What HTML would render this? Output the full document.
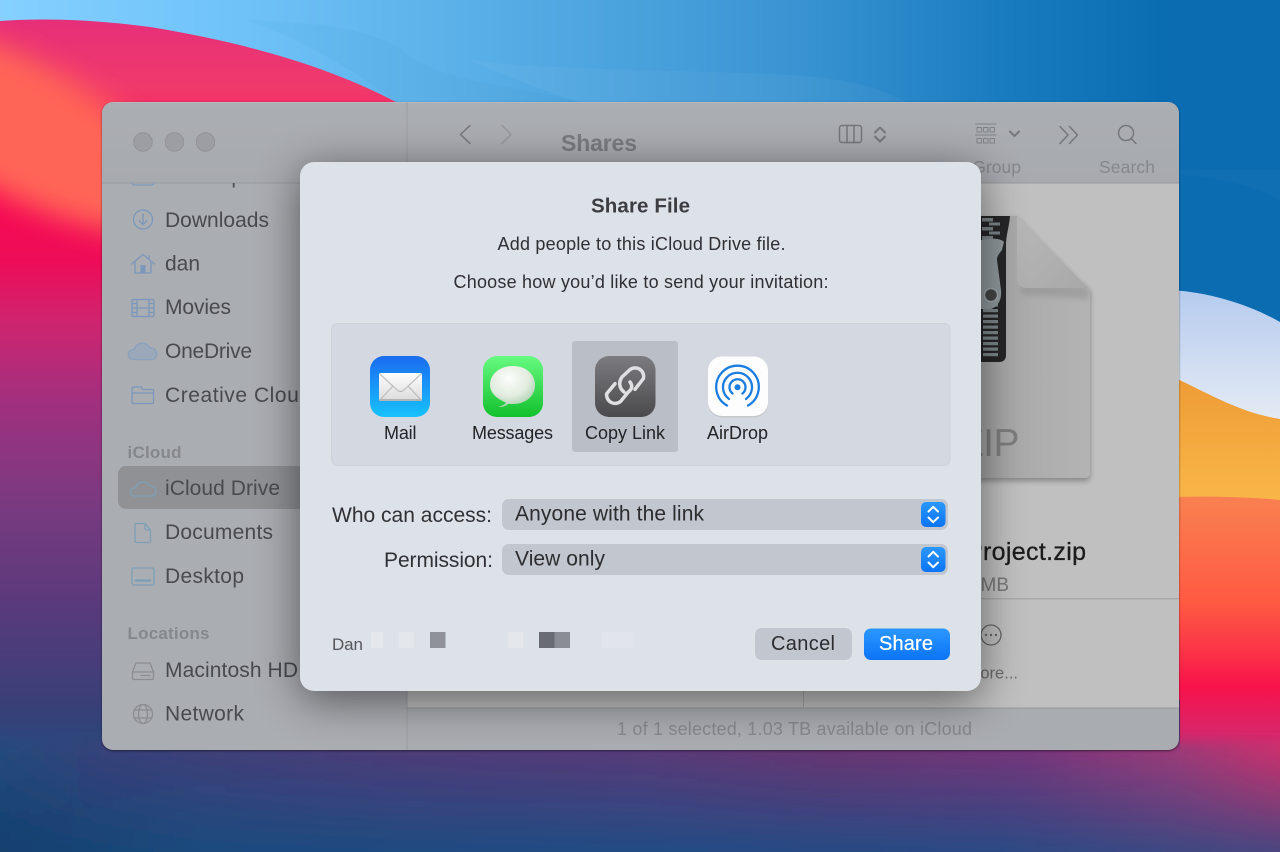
<!DOCTYPE html>
<html><head><meta charset="utf-8"><title>Share File</title>
<style>
html,body{margin:0;padding:0;width:1280px;height:852px;overflow:hidden;background:#1f4c82}
svg{display:block;position:absolute;left:0;top:0;filter:blur(.3px)}
text{font-family:"Liberation Sans",sans-serif;white-space:pre}
</style></head><body>
<svg width="1280" height="852" viewBox="0 0 1280 852" xmlns="http://www.w3.org/2000/svg">
<defs>
<linearGradient id="sky" x1="0" y1="0" x2="1" y2="0"><stop offset="0" stop-color="#85d0ff"/><stop offset=".19" stop-color="#6ec2f8"/><stop offset=".38" stop-color="#58aee6"/><stop offset=".62" stop-color="#3a94d2"/><stop offset=".78" stop-color="#1a7cc0"/><stop offset=".94" stop-color="#0669ae"/><stop offset="1" stop-color="#0566aa"/></linearGradient>
<linearGradient id="left" gradientUnits="userSpaceOnUse" x1="0" y1="20" x2="0" y2="852"><stop offset="0" stop-color="#e62f78"/><stop offset=".08" stop-color="#f03a6c"/><stop offset=".18" stop-color="#fb0a52"/><stop offset=".29" stop-color="#ee0c58"/><stop offset=".36" stop-color="#d0246f"/><stop offset=".46" stop-color="#a0307f"/><stop offset=".58" stop-color="#7a3a80"/><stop offset=".7" stop-color="#5a3a7c"/><stop offset=".82" stop-color="#3a3f78"/><stop offset=".89" stop-color="#264a7c"/><stop offset="1" stop-color="#12406e"/></linearGradient>
<linearGradient id="wave" gradientUnits="userSpaceOnUse" x1="0" y1="290" x2="0" y2="420"><stop offset="0" stop-color="#b6cbee"/><stop offset="1" stop-color="#e4ebf5"/></linearGradient>
<linearGradient id="orange" gradientUnits="userSpaceOnUse" x1="0" y1="380" x2="0" y2="500"><stop offset="0" stop-color="#ee9c36"/><stop offset="1" stop-color="#f9b648"/></linearGradient>
<linearGradient id="red" gradientUnits="userSpaceOnUse" x1="0" y1="497" x2="0" y2="760"><stop offset="0" stop-color="#f98050"/><stop offset=".4" stop-color="#ff5a42"/><stop offset=".6" stop-color="#fb3048"/><stop offset=".72" stop-color="#f8124a"/><stop offset=".88" stop-color="#dc2468"/><stop offset="1" stop-color="#c02e72"/></linearGradient>
<linearGradient id="bot" gradientUnits="userSpaceOnUse" x1="0" y1="0" x2="1280" y2="0"><stop offset="0" stop-color="#264a7c"/><stop offset=".08" stop-color="#38427a"/><stop offset=".31" stop-color="#4f3c78"/><stop offset=".5" stop-color="#5a3a78"/><stop offset=".65" stop-color="#6a3572"/><stop offset=".8" stop-color="#78357a"/><stop offset=".92" stop-color="#a03a78"/><stop offset="1" stop-color="#d0306c"/></linearGradient>
<linearGradient id="bot2" gradientUnits="userSpaceOnUse" x1="0" y1="0" x2="1280" y2="0"><stop offset="0" stop-color="#12406e"/><stop offset=".16" stop-color="#1c4a7e"/><stop offset=".5" stop-color="#224c84"/><stop offset=".78" stop-color="#2a4a84"/><stop offset="1" stop-color="#484680"/></linearGradient>
<linearGradient id="fade" x1="0" y1="0" x2="0" y2="1"><stop offset="0" stop-color="#fff" stop-opacity="0"/><stop offset=".5" stop-color="#fff" stop-opacity=".5"/><stop offset="1" stop-color="#fff" stop-opacity="1"/></linearGradient>
<mask id="fm" maskUnits="userSpaceOnUse" x="-40" y="745" width="1360" height="140"><rect x="-40" y="745" width="1360" height="107" fill="url(#fade)"/><rect x="-40" y="852" width="1360" height="40" fill="#fff"/></mask>
<linearGradient id="title" x1="0" y1="0" x2="0" y2="1"><stop offset="0" stop-color="#abaeb3"/><stop offset="1" stop-color="#a7aaaf"/></linearGradient>
<linearGradient id="mail" x1="0" y1="0" x2="0" y2="1"><stop offset="0" stop-color="#1a6cf0"/><stop offset="1" stop-color="#17c2fc"/></linearGradient>
<linearGradient id="env" x1="0" y1="0" x2="0" y2="1"><stop offset="0" stop-color="#fdfdfd"/><stop offset="1" stop-color="#dcdcdc"/></linearGradient>
<linearGradient id="msg" x1="0" y1="0" x2="0" y2="1"><stop offset="0" stop-color="#66fa80"/><stop offset="1" stop-color="#12c02c"/></linearGradient>
<radialGradient id="bub" cx=".42" cy=".3" r=".8"><stop offset="0" stop-color="#fbfdfb"/><stop offset=".55" stop-color="#e2ecdf"/><stop offset="1" stop-color="#9cc8a4"/></radialGradient>
<linearGradient id="lnk" x1="0" y1="0" x2="0" y2="1"><stop offset="0" stop-color="#7c7c80"/><stop offset="1" stop-color="#4a4a4c"/></linearGradient>
<linearGradient id="sh" x1="0" y1="0" x2="0" y2="1"><stop offset="0" stop-color="#2b97ff"/><stop offset="1" stop-color="#0a74f5"/></linearGradient>
<linearGradient id="pg" x1="0" y1="0" x2="1" y2="0"><stop offset="0" stop-color="#a4a4a4"/><stop offset="1" stop-color="#b4b4b4"/></linearGradient>
<linearGradient id="fold" x1="0" y1="0" x2="1" y2="1"><stop offset="0" stop-color="#b8b8b8"/><stop offset="1" stop-color="#a8a8a8"/></linearGradient>
<pattern id="teeth" x="983" y="303" width="17" height="5.500" patternUnits="userSpaceOnUse"><rect x="0" y=".5" width="15" height="3.200" fill="#7d878b"/></pattern>
<pattern id="teeth2" x="982" y="217" width="20" height="9" patternUnits="userSpaceOnUse"><rect x="0" y="1" width="11" height="3.500" fill="#7d878b"/><rect x="7" y="5.500" width="11" height="3" fill="#7d878b"/></pattern>
<clipPath id="win"><rect x="102" y="102" width="1077" height="648" rx="11"/></clipPath>
<clipPath id="sideclip"><rect x="102" y="183" width="305" height="10"/></clipPath>
<clipPath id="redc"><path d="M0,21 C40,18 90,19 150,27 C230,40 320,62 396,102 L420,400 L0,400Z"/></clipPath>
<filter id="blur" x="-30%" y="-30%" width="160%" height="160%"><feGaussianBlur stdDeviation="22"/></filter>
<filter id="b14" x="-50%" y="-50%" width="200%" height="200%"><feGaussianBlur stdDeviation="14"/></filter>
<filter id="b6" filterUnits="userSpaceOnUse" x="-60" y="700" width="1400" height="200"><feGaussianBlur stdDeviation="6"/></filter>
<filter id="s2" x="-30%" y="-30%" width="160%" height="160%"><feGaussianBlur stdDeviation="3"/></filter>
<filter id="s1" x="-20%" y="-20%" width="140%" height="140%"><feGaussianBlur stdDeviation="1"/></filter>
</defs>

<!-- wallpaper -->
<rect width="1280" height="852" fill="url(#sky)"/>
<path d="M470,60 C530,70 700,70 790,75 C840,78 875,85 906,102 L580,102 C540,90 505,75 470,60Z" fill="#ffffff" opacity=".04"/>
<path d="M245,20 C320,22 370,30 400,48 C440,85 520,85 580,102 L396,102 C340,60 290,35 245,20Z" fill="#08508a" opacity=".03"/>
<path d="M0,21 C40,18 90,19 150,27 C230,40 320,62 396,102 L420,852 L0,852Z" fill="url(#left)"/>
<g clip-path="url(#redc)"><ellipse cx="20" cy="128" rx="185" ry="66" transform="rotate(28 20 128)" fill="#ff6556" filter="url(#b14)"/></g>
<path d="M1170,0H1280V322H1170Z" fill="#0b6cb2"/>
<path d="M1170,170H1280V200C1240,178 1200,178 1170,172Z" fill="#fff" opacity=".025"/>
<path d="M1170,290 C1210,292 1250,305 1280,322 V430 H1170Z" fill="url(#wave)"/>
<path d="M1170,376 C1200,388 1235,412 1280,419 V510 H1170Z" fill="url(#orange)"/>
<path d="M1170,497 C1210,496 1250,497 1280,500 V852 H1170Z" fill="url(#red)"/>
<rect x="102" y="700" width="1078" height="60" fill="#5a3a78"/>
<g filter="url(#b6)">
<rect x="-40" y="742" width="1360" height="150" fill="url(#bot)"/>
<rect x="-40" y="742" width="1360" height="150" fill="url(#bot2)" mask="url(#fm)"/>
</g>

<!-- window -->
<rect x="102" y="103" width="1077" height="648" rx="11" fill="#000" opacity=".5" filter="url(#s1)"/>
<g clip-path="url(#win)">
<rect x="102" y="102" width="1077" height="648" fill="#aaadb2"/>
<rect x="102" y="102" width="1077" height="81" fill="url(#title)"/>
<rect x="407" y="183" width="772" height="525" fill="#c0c0c0"/>
<rect x="407" y="708" width="772" height="42" fill="#a9acb1"/>
<rect x="102" y="182.500" width="1077" height="1" fill="#97999d"/>
<rect x="406.500" y="102" width="1" height="648" fill="#9c9ea2"/>
<rect x="407" y="707.500" width="772" height="1" fill="#98999d"/>
<rect x="803" y="600" width="1" height="108" fill="#a4a4a4"/>
<rect x="803" y="598" width="376" height="1.400" fill="#aaaaaa"/>
<rect x="102" y="102" width="1077" height="1" fill="#bcbec2" opacity=".7"/>

<!-- traffic lights -->
<g fill="#9c9ea3" stroke="#8e9095" stroke-width=".8"><circle cx="143" cy="142" r="9.300"/><circle cx="174.500" cy="142" r="9.300"/><circle cx="205.500" cy="142" r="9.300"/></g>

<!-- toolbar -->
<g fill="none" stroke="#74777c" stroke-width="1.500" stroke-linecap="round" stroke-linejoin="round">
<path d="M470,125.500 L460.500,134.500 L470,143.500"/>
<path d="M502,125.500 L511,134.500 L502,143.500" stroke="#94979c"/>
<rect x="839.500" y="125.500" width="22" height="17" rx="2.500"/><path d="M847,125.500V142.500M854,125.500V142.500"/>
<path d="M875,132.500 L880,127.500 L885,132.500M875,136.500 L880,141.500 L885,136.500" stroke-width="2"/>
<g stroke-width="1" stroke="#808388"><path d="M975.500,124H996M975.500,135H996"/><rect x="977" y="127.500" width="4.500" height="4.500"/><rect x="983.500" y="127.500" width="4.500" height="4.500"/><rect x="990" y="127.500" width="4.500" height="4.500"/><rect x="977" y="138.500" width="4.500" height="4.500"/><rect x="983.500" y="138.500" width="4.500" height="4.500"/><rect x="990" y="138.500" width="4.500" height="4.500"/></g>
<path d="M1010,131.500 L1014.500,136 L1019,131.500" stroke-width="2"/>
<path d="M1060,126.500 L1068,135 L1060,143.500M1069.500,126.500 L1077.500,135 L1069.500,143.500"/>
<circle cx="1126" cy="133" r="7.500"/><path d="M1131.500,139 L1136,143.500"/>
</g>
<text x="561" y="151" font-size="23" font-weight="700" fill="#797b80" textLength="76">Shares</text>
<text x="1021" y="173" text-anchor="end" font-size="17.500" fill="#85888c">Group</text>
<text x="1099" y="173" font-size="17.500" fill="#85888c" textLength="56">Search</text>

<!-- sidebar -->
<g clip-path="url(#sideclip)"><text x="165" y="183" font-size="21" fill="#4e5056" textLength="78">Desktop</text><rect x="132" y="172" width="22" height="13" rx="2" fill="none" stroke="#7e9bc0" stroke-width="1.300"/></g>
<g font-size="21" fill="#484a50">
<text x="165" y="227" textLength="104">Downloads</text>
<text x="165" y="270.500" textLength="35">dan</text>
<text x="165" y="314" textLength="66">Movies</text>
<text x="165" y="358" textLength="87">OneDrive</text>
<text x="165" y="402" textLength="146">Creative Cloud</text>
<text x="165" y="539" textLength="108">Documents</text>
<text x="165" y="583" textLength="79">Desktop</text>
<text x="165" y="677" textLength="133">Macintosh HD</text>
<text x="165" y="720.500" textLength="79">Network</text>
</g>
<g font-size="17" font-weight="700" fill="#85888d">
<text x="127.500" y="458" textLength="54">iCloud</text>
<text x="127.500" y="639" textLength="82">Locations</text>
</g>
<rect x="118" y="466" width="240" height="43" rx="8" fill="#000" opacity=".16" style="mix-blend-mode:multiply"/>
<text x="165" y="495" font-size="21" fill="#484a50" textLength="115">iCloud Drive</text>

<!-- sidebar icons -->
<g fill="none" stroke="#7b97bb" stroke-width="1.300" stroke-linejoin="round" stroke-linecap="round">
<circle cx="143" cy="219.500" r="9.500"/><path d="M143,214V224.500M139,220.500L143,224.500L147,220.500"/>
<path d="M131.500,264 L143,254.500 L154.500,264M135,261V273H151V261M149,255.500V259"/>
<rect x="140.500" y="265" width="5" height="8" fill="#7b97bb" stroke="none"/>
<rect x="132" y="299.500" width="22" height="17" rx="1.500"/><path d="M137,299.500V316.500M149,299.500V316.500M132,308H154M132,303.500H137M132,312.500H137M149,303.500H154M149,312.500H154"/>
<path d="M133,359.500 C126,358.500 127,349 134,349.500 C136,343 146,340 150,348 C158,347 159,359.500 152,359.500Z" fill="#8fa5c0" fill-opacity=".6" stroke="#8aa0bc"/>
<path d="M132,393 V388.500 C132,387.500 133,387 134,387 H141 L143,389.500 H152.500 C153.500,389.500 153.500,390 153.500,391 V402 C153.500,403 153,403.500 152,403.500 H133.500 C132.500,403.500 132,403 132,402Z"/><path d="M132,393H153.500"/>
<g stroke="#7ea0b6"><path d="M134.500,496 C128,495.500 130,487 135.500,488 C138,481 147,480 150,486 C157,484.500 158,496 152,496Z"/>
<path d="M136,523.500 H145 L150.500,530 V541 C150.500,542 150,542.500 149,542.500 H136 C135,542.500 135,542 135,541 V525 C135,524 135,523.500 136,523.500Z"/><path d="M145,523.500V528.500C145,529.500 145.500,530 146.500,530H150.500"/>
<rect x="132" y="568" width="22" height="17" rx="1.500"/><path d="M136,580.500H150" stroke-width="2.500"/></g>
<g stroke="#8b8d92"><path d="M132.500,672 L136,663 H150 L153.500,672 V678 C153.500,679 153,679.500 152,679.500 H134 C133,679.500 132.500,679 132.500,678Z"/><path d="M132.500,672H153.500M141,675.500H150" stroke-dasharray="1.500 1"/>
<circle cx="143" cy="714" r="9.500"/><ellipse cx="143" cy="714" rx="4.500" ry="9.500"/><path d="M134,710H152M134,718H152"/></g>
</g>

<!-- file preview -->
<path d="M975,216 H1017 L1090,290 V473 C1090,476 1088,478 1085,478 H975Z" fill="#000" opacity=".3" filter="url(#s2)" transform="translate(0,3)"/>
<path d="M975,216 H1017 L1090,290 V473 C1090,476 1088,478 1085,478 H975Z" fill="url(#pg)"/>
<path d="M975,216 H1010 C1009,228 1006,235 1006,245 V355 C1006,360 1003,362 999,362 H975Z" fill="#262628"/>
<rect x="982" y="217" width="20" height="28" fill="url(#teeth2)"/>
<rect x="983" y="303" width="17" height="55" fill="url(#teeth)"/>
<path d="M981,240 C990,238 1000,238 1004,242 L1002,250 C999,254 997,256 997,260 L1001,290 C1002,301 997,307 991,309 H981Z" fill="#8f989c"/>
<circle cx="991" cy="295" r="6.500" fill="#444648" stroke="#a0a8ac" stroke-width="1.500"/>
<path d="M1020,286 H1088 L1090,300 C1060,296 1040,296 1022,294Z" fill="#000" opacity=".1" filter="url(#s2)"/>
<path d="M1017,216 L1088,288 H1027 C1021,288 1017,284 1017,278Z" fill="url(#fold)"/>
<text x="1019" y="456" text-anchor="end" font-size="39" letter-spacing="-.5" fill="#7e7e7e">ZIP</text>
<text x="966" y="560" font-size="25" fill="#1c1c1c" stroke="#1c1c1c" stroke-width=".3" textLength="120">Project.zip</text>
<text x="1009" y="591" text-anchor="end" font-size="19" fill="#787878">2 MB</text>
<circle cx="991" cy="635" r="10" fill="none" stroke="#666" stroke-width="1.300"/>
<g fill="#666"><circle cx="986" cy="635" r="1.200"/><circle cx="991" cy="635" r="1.200"/><circle cx="996" cy="635" r="1.200"/></g>
<text x="1018" y="678.500" text-anchor="end" font-size="16.500" fill="#6e6e6e">More...</text>
<text x="617" y="735" font-size="18" fill="#85888d" textLength="355">1 of 1 selected, 1.03 TB available on iCloud</text>

<!-- modal shadow -->
<rect x="300" y="170" width="681" height="530" rx="14" fill="#000" opacity=".5" filter="url(#blur)"/>
</g>

<!-- dialog -->
<rect x="300" y="162" width="681" height="529" rx="14" fill="#dde1e8"/>
<text x="591" y="212.500" font-size="20.500" font-weight="700" fill="#3c3d40" textLength="99">Share File</text>
<text x="497.500" y="250" font-size="18" fill="#2f3033" textLength="288">Add people to this iCloud Drive file.</text>
<text x="453.500" y="288" font-size="18" fill="#2f3033" textLength="375">Choose how you’d like to send your invitation:</text>

<rect x="331.500" y="323.500" width="618.500" height="142" rx="6" fill="#d4d8e0" stroke="#cdd1d9"/>
<rect x="572" y="341" width="106" height="111" rx="3" fill="#babec7"/>

<!-- Mail -->
<rect x="370" y="356" width="60" height="61" rx="14" fill="url(#mail)"/>
<rect x="379" y="373" width="43" height="27.500" rx="2" fill="url(#env)"/>
<path d="M380,374 L397,390 C399,392 402,392 404,390 L421,374M380,400 L393,386M421,400 L408,386" fill="none" stroke="#bcbcbc" stroke-width="1.200"/>
<rect x="379" y="399" width="43" height="2" rx="1" fill="#b4b4b4"/>
<!-- Messages -->
<rect x="483" y="356" width="60" height="61" rx="14" fill="url(#msg)"/>
<path d="M498,406.500 C503,406 505,404 506,402.500 C497,399 490,393 490,385 C490,374 500,366 513,366 C526,366 535,374 535,385 C535,396 526,404 513,404 C511,404 510,404 508,404 C505,406.500 502,407.500 498,406.500Z" fill="url(#bub)"/>
<!-- Copy Link -->
<rect x="595" y="356" width="60.500" height="61" rx="14" fill="url(#lnk)"/>
<g fill="none" stroke="#e0e0e2" stroke-width="3.500" stroke-linecap="round" stroke-linejoin="round">
<path d="M624,392 C619,388 618.500,382 622,377 L629,370.500 A8.500,8.500 0 0 1 643.300,378.700 L635,389.300"/>
<path d="M630,382 C632.500,385 632.500,389 628.300,392 L620.700,401.300 A8.500,8.500 0 0 1 606.700,393.700 L615,383.700"/>
</g>
<!-- AirDrop -->
<rect x="708" y="357" width="60" height="60.500" rx="14" fill="#c6c8cc"/>
<rect x="708" y="356.500" width="60" height="59.500" rx="14" fill="#fdfdfd"/>
<g fill="none" stroke="#1b7de0" stroke-width="2.300" stroke-linecap="round">
<path d="M732.500,393.500 A8,8 0 1 1 742.500,393.500"/>
<path d="M729,399 A14.500,14.500 0 1 1 746,399"/>
<path d="M727,405.500 A21.300,21.300 0 1 1 748,405.500"/>
</g>
<circle cx="737.500" cy="387.300" r="3" fill="#1b7de0"/>

<g font-size="18" fill="#222326">
<text x="384" y="439" textLength="32.500">Mail</text>
<text x="472" y="439" textLength="81">Messages</text>
<text x="585" y="439" textLength="80">Copy Link</text>
<text x="707" y="439" textLength="61">AirDrop</text>
</g>

<text x="332" y="522" font-size="21" fill="#303134" textLength="160">Who can access:</text>
<text x="384" y="567" font-size="21" fill="#303134" textLength="109">Permission:</text>

<rect x="502" y="499" width="446" height="31" rx="7" fill="#c2c6ce"/>
<rect x="502" y="544" width="446" height="31" rx="7" fill="#c2c6ce"/>
<text x="515" y="520.500" font-size="21" fill="#2c2d30" textLength="189">Anyone with the link</text>
<text x="515" y="565.500" font-size="21" fill="#2c2d30" textLength="90">View only</text>
<g>
<rect x="921" y="502" width="24.500" height="25" rx="5" fill="url(#sh)"/>
<rect x="921" y="547" width="24.500" height="25" rx="5" fill="url(#sh)"/>
<g fill="none" stroke="#fff" stroke-width="2" stroke-linecap="round" stroke-linejoin="round">
<path d="M928.500,511.500 L933.200,506.800 L938,511.500M928.500,517.500 L933.200,522.200 L938,517.500"/>
<path d="M928.500,556.500 L933.200,551.800 L938,556.500M928.500,562.500 L933.200,567.200 L938,562.500"/>
</g></g>

<text x="332" y="650" font-size="17" fill="#55565a" textLength="31">Dan</text>
<g>
<rect x="371" y="632" width="12" height="16" fill="#e4e7ec"/>
<rect x="398.500" y="632" width="15.500" height="16" fill="#e4e7ec"/>
<rect x="430" y="632" width="15.500" height="16" fill="#90929a"/>
<rect x="508" y="632" width="15.500" height="16" fill="#e4e7ec"/>
<rect x="539" y="632" width="15.500" height="16" fill="#6a6c74"/>
<rect x="554.500" y="632" width="15.500" height="16" fill="#8b8d94"/>
<rect x="602" y="632" width="31" height="16" fill="#e1e4ea"/>
</g>

<rect x="755" y="628" width="97" height="32" rx="7" fill="#c2c6ce"/>
<text x="771" y="650" font-size="20" fill="#2c2d30" textLength="64">Cancel</text>
<rect x="864" y="628.500" width="86" height="31.500" rx="7" fill="url(#sh)"/>
<text x="879" y="650" font-size="20" fill="#fff" stroke="#fff" stroke-width=".25" textLength="54">Share</text>
</svg>
</body></html>
